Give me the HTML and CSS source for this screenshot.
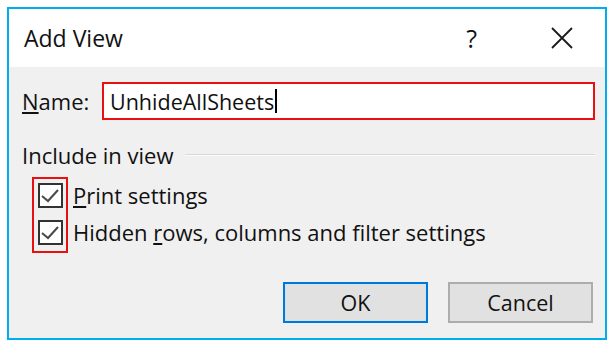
FILE: index.html
```html
<!DOCTYPE html>
<html>
<head>
<meta charset="utf-8">
<link rel="stylesheet" href="styles.css">
</head>
<body>
<div class="dialog">
  <div class="titlebar">
    <span class="title">Add View</span>
    <span class="help">?</span>
    <svg class="close" width="22" height="22" viewBox="0 0 22 22"><path d="M1 1L21 21M21 1L1 21" stroke="#1a1a1a" stroke-width="1.8" fill="none"/></svg>
  </div>
  <div class="content">
    <div class="name-row">
      <span class="label"><u>N</u>ame:</span>
      <div class="input"><span>UnhideAllSheets</span><span class="caret"></span></div>
    </div>
    <div class="group-head">
      <span>Include in view</span>
      <div class="rule"></div>
    </div>
    <div class="checks">
      <div class="cb-frame">
        <span class="cb"><svg width="21" height="21" viewBox="0 0 21 21"><path d="M2 11L8 16L18 5" stroke="#4a4a4a" stroke-width="2" fill="none"/></svg></span>
        <span class="cb"><svg width="21" height="21" viewBox="0 0 21 21"><path d="M2 11L8 16L18 5" stroke="#4a4a4a" stroke-width="2" fill="none"/></svg></span>
      </div>
      <div class="labels">
        <span class="opt"><u>P</u>rint settings</span>
        <span class="opt">Hidden <u>r</u>ows, columns and filter settings</span>
      </div>
    </div>
    <div class="buttons">
      <button class="btn ok">OK</button>
      <button class="btn">Cancel</button>
    </div>
  </div>
</div>
</body>
</html>
```

FILE: styles.css
```css
* { box-sizing: border-box; }
body {
  margin: 0;
  background: #fff;
  font-family: "Open Sans", "Noto Sans", sans-serif;
  color: #111;
}
.dialog {
  margin: 7px;
  width: 600px;
  height: 333px;
  border: 2px solid #00adef;
  background: #f0f0f0;
  display: flex;
  flex-direction: column;
}
.titlebar {
  height: 58px;
  background: #fff;
  display: flex;
  align-items: center;
  padding-left: 15px;
  padding-right: 32px;
}
.title {
  flex: 1;
  font-size: 23px;
  color: #111;
}
.help {
  font-size: 25px;
  margin-right: 74px;
  color: #111;
}
.close { display: block; }
.content {
  flex: 1;
  padding: 15px 10px 0 13px;
  display: flex;
  flex-direction: column;
}
.name-row {
  display: flex;
  align-items: center;
  font-size: 22px;
}
.label { width: 80px; }
.input {
  flex: 1;
  height: 38px;
  border: 2px solid #e81010;
  background: #fff;
  display: flex;
  align-items: center;
  padding-left: 6px;
  font-size: 21.5px;
}
.caret {
  width: 2px;
  height: 24px;
  background: #000;
  margin-left: 1px;
}
.group-head {
  margin-top: 21px;
  height: 28px;
  display: flex;
  align-items: center;
  font-size: 22px;
}
.rule {
  flex: 1;
  margin-left: 12px;
  height: 2px;
  border-top: 1px solid #d9d9d9;
  border-bottom: 1px solid #fbfbfb;
}
.checks {
  margin-top: 8px;
  display: flex;
}
.cb-frame {
  margin-left: 10px;
  border: 2px solid #e81010;
  padding: 4px 3px 6px 4px;
  display: flex;
  flex-direction: column;
  gap: 12px;
}
.cb {
  width: 25px;
  height: 25px;
  border: 2px solid #333;
  background: #fff;
  display: flex;
}
.labels {
  margin-left: 5px;
  padding-top: 6px;
  display: flex;
  flex-direction: column;
  gap: 12px;
  font-size: 22px;
}
.opt {
  height: 25px;
  line-height: 25px;
}
.buttons {
  margin-top: 29px;
  margin-right: 2px;
  display: flex;
  justify-content: flex-end;
  gap: 20px;
}
.btn {
  width: 145px;
  height: 41px;
  border: 2px solid #adadad;
  background: #e1e1e1;
  font-family: inherit;
  font-size: 21.5px;
  color: #111;
  padding: 0;
}
.btn.ok {
  border-color: #0078d7;
  box-shadow: inset 0 0 0 1px #cfe3f5;
}
```
